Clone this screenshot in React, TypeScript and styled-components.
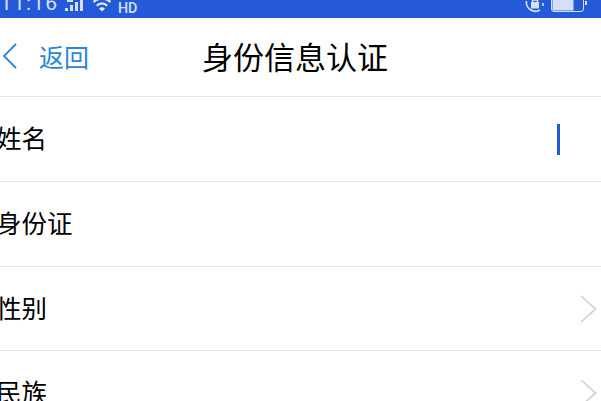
import React from 'react'
import styled, { createGlobalStyle } from 'styled-components';

const cjk = `"Noto Sans CJK SC", "Noto Sans", sans-serif`;

const Global = createGlobalStyle`
  html, body {
    margin: 0;
    padding: 0;
    background: #fff;
    overflow: hidden;
  }
  * {
    box-sizing: border-box;
  }
`;

const Page = styled.main`
  width: 601px;
  height: 401px;
  overflow: hidden;
  font-family: ${cjk};
  background: #fff;
`;

const StatusBar = styled.div`
  height: 18px;
  background: #2459d8;
  color: #d5e0f8;
  display: flex;
  align-items: flex-end;
  justify-content: space-between;
  overflow: hidden;
  padding-right: 14px;
`;

const StatusLeft = styled.div`
  display: flex;
  align-items: flex-end;
  height: 18px;
`;

const StatusRight = styled.div`
  display: flex;
  align-items: flex-end;
  gap: 6px;
  height: 18px;
`;

const Clock = styled.span`
  font-family: "Roboto", sans-serif;
  font-size: 21px;
  line-height: 21px;
  letter-spacing: 1.2px;
  margin-bottom: 4px;
  width: 64px;
  flex: none;
`;

const Hd = styled.span`
  font-family: "Roboto", sans-serif;
  font-size: 15px;
  line-height: 15px;
  font-weight: 500;
  margin: 0 0 2px 7px;
  transform: scaleX(0.95);
  transform-origin: left;
`;

const Glyph = styled.svg<{ $gap?: number }>`
  display: block;
  flex: none;
  margin-left: ${(props) => props.$gap ?? 0}px;
`;

const Header = styled.header`
  height: 79px;
  border-bottom: 1px solid #e4e4e4;
  display: grid;
  grid-template-columns: 1fr auto 1fr;
  align-items: center;
  padding-right: 11px;
  padding-bottom: 2px;
`;

const Back = styled.div`
  display: flex;
  align-items: center;
  color: #2a86d6;
  font-size: 25px;
  line-height: 34px;
  padding-left: 2px;
  gap: 22px;
`;

const Title = styled.h1`
  margin: 0;
  font-size: 31px;
  font-weight: 400;
  color: #000;
  line-height: 40px;
`;

const Row = styled.div`
  height: 85px;
  border-bottom: 1px solid #e4e4e4;
  display: flex;
  align-items: center;
  justify-content: space-between;
  padding-right: 4px;
  padding-bottom: 4px;
  &:nth-of-type(n + 4) {
    height: 84px;
  }
`;

const Label = styled.span`
  font-size: 25.5px;
  line-height: 34px;
  color: #000;
  margin-left: -4px;
`;

const Caret = styled.span`
  width: 3px;
  height: 31px;
  background: #2459d8;
  margin-right: 37px;
  margin-top: 4px;
`;

const Chevron = styled(Glyph)`
  margin-top: 4px;
`;

const ArrowIcon = () => (
  <Chevron width="17" height="28" viewBox="0 0 17 28" fill="none">
    <path d="M1 1 L15.5 14 L1 27" stroke="#cfcfcf" strokeWidth="1.6" />
  </Chevron>
);

const rows = [
  { name: '姓名', caret: true },
  { name: '身份证' },
  { name: '性别', arrow: true },
  { name: '民族', arrow: true },
];

const App = () => {
  return (
    <Page>
      <Global />
      <StatusBar>
        <StatusLeft>
          <Clock>11:16</Clock>
          <Glyph width="20" height="18" viewBox="0 0 20 18">
            <g fill="#d5e0f8">
              <rect x="1" y="8" width="3" height="3" />
              <rect x="6" y="5" width="3" height="6" />
              <rect x="11" y="2" width="3" height="9" />
              <rect x="16" y="0" width="3" height="11" />
              <rect x="3" y="0" width="6" height="2" />
            </g>
          </Glyph>
          <Glyph $gap={9} width="18" height="18" viewBox="0 0 18 18" fill="none">
            <path d="M0.5 2 Q9 -5 17.5 2" stroke="#e4ebfb" strokeWidth="2.2" />
            <path d="M3.8 5.6 Q9 1 14.2 5.6" stroke="#e4ebfb" strokeWidth="2.2" />
            <path d="M6 8.4 L9 11.5 L12 8.4 Q9 6 6 8.4 Z" fill="#e4ebfb" />
          </Glyph>
          <Hd>HD</Hd>
        </StatusLeft>
        <StatusRight>
          <Glyph width="20" height="18" viewBox="0 0 20 18" fill="none">
            <path d="M1.5 1 A9 9 0 0 0 15 10" stroke="#d5e0f8" strokeWidth="1.6" />
            <path d="M18 6 V3" stroke="#d5e0f8" strokeWidth="1.6" />
            <rect x="6" y="2" width="8" height="6.5" fill="#d5e0f8" />
            <path d="M7.5 2 V0 H12.5 V2" stroke="#d5e0f8" strokeWidth="1.5" />
          </Glyph>
          <Glyph width="36" height="18" viewBox="0 0 36 18" fill="none">
            <path d="M0.5 -3 V9 Q0.5 11.5 3 11.5 H30 Q32.5 11.5 32.5 9 V-3" stroke="#d5e0f8" strokeWidth="1" />
            <rect x="1.5" y="-2" width="21" height="12.5" fill="#d5e0f8" />
            <rect x="34" y="1" width="2" height="4" fill="#d5e0f8" />
          </Glyph>
        </StatusRight>
      </StatusBar>
      <Header>
        <Back>
          <Glyph width="15" height="26" viewBox="0 0 15 26" fill="none">
            <path d="M14 1 L2 13 L14 25" stroke="#2a86d6" strokeWidth="1.8" />
          </Glyph>
          <span>返回</span>
        </Back>
        <Title>身份信息认证</Title>
        <span />
      </Header>
      {rows.map((row) => (
        <Row key={row.name}>
          <Label>{row.name}</Label>
          {row.caret && <Caret />}
          {row.arrow && <ArrowIcon />}
        </Row>
      ))}
    </Page>
  )
}

export default App
